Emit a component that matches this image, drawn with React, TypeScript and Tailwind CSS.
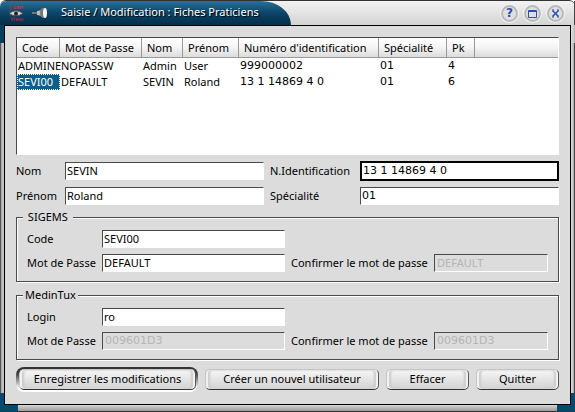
import { useState } from "react";
import type { ReactNode } from "react";

const columns = ["Code", "Mot de Passe", "Nom", "Prénom", "Numéro d'identification", "Spécialité", "Pk", ""];
const widths = ["w-[43px]", "w-[82px]", "w-[41px]", "w-[56px]", "w-[140px]", "w-[68px]", "w-[28px]", ""];
const rows = [
  ["ADMINE", "NOPASSW", "Admin", "User", "999000002", "01", "4", ""],
  ["SEVI00", "DEFAULT", "SEVIN", "Roland", "13 1 14869 4 0", "01", "6", ""],
];

// Numbers are set in a wider face than names.
const face = (text: string) => (/^\d/.test(text) ? "font-['DejaVu_Sans',sans-serif]" : "");

function Field({ id, label, value, disabled = false, focused = false }: {
  id: string; label: string; value: string; disabled?: boolean; focused?: boolean;
}) {
  const [text, setText] = useState(value);
  const look = disabled
    ? "h-[18px] border px-[2px] bg-[#dcdcdc] text-[#b4b4b4] border-t-[#4a4a4a] border-l-[#4a4a4a] border-b-white border-r-white"
    : focused
      ? "h-5 -my-px border-2 px-px bg-white border-black outline-none"
      : "h-[18px] border px-px bg-white border-t-[#4a4a4a] border-l-[#4a4a4a] border-b-white border-r-white";
  return (
    <>
      <label htmlFor={id} className="whitespace-nowrap leading-4">{label}</label>
      <input
        id={id}
        value={text}
        disabled={disabled}
        onChange={(e) => setText(e.target.value)}
        className={`w-full min-w-0 pb-px ${look} ${face(text)}`}
      />
    </>
  );
}

function Group({ title, children }: { title: string; children: ReactNode }) {
  return (
    <fieldset className="min-w-0 border border-[#4a4a4a] px-[10px] pt-[5px] pb-[9px] shadow-[inset_1px_1px_0_white,1px_1px_0_white]">
      <legend className="-ml-1 bg-[#dcdcdc] px-[2px] leading-4 whitespace-pre">{title}</legend>
      <div className="grid grid-cols-[75px_183fr_6px_143px_114fr] items-center gap-y-[6px]">{children}</div>
    </fieldset>
  );
}

function PushButton({ children, main = false }: { children: ReactNode; main?: boolean }) {
  return (
    <div className={main ? "rounded-[8px] bg-linear-to-b from-[#333] from-20% to-white to-85% p-[2px] pl-[3px]" : ""}>
      <button className="block h-[21px] w-full rounded-[5px] border border-[#c4c4c4] border-r-[#555] border-b-[#333] bg-linear-to-b from-[#f6f6f6] via-[#e4e4e4] to-[#d2d2d2] whitespace-nowrap shadow-[inset_2px_0_1px_#f4f4f4,inset_-2px_0_1px_#f4f4f4,inset_4px_0_2px_#cacaca,inset_-4px_0_2px_#cacaca]">
        {children}
      </button>
    </div>
  );
}

function RoundButton({ label, children }: { label: string; children: ReactNode }) {
  return (
    <button aria-label={label} className="flex size-[17px] items-center justify-center rounded-full border-2 border-[#b9b9b9] bg-[#dfdfdf] text-[#2a4fae] shadow-[0_0_0_1px_#f4f4f4]">
      {children}
    </button>
  );
}

function SideFrame({ edge, top }: { edge: string; top: string }) {
  return (
    <div className={`flex w-1 shrink-0 flex-col ${edge}`}>
      <div className={`h-[18px] ${top}`} />
      <div className="grow" />
      <div className="h-3 bg-[#064a70]" />
    </div>
  );
}

export default function App() {
  return (
    <div className="w-full bg-white font-['Noto_Sans','DejaVu_Sans',sans-serif] text-[11px] text-black">
      <header className="flex h-[25px] rounded-t-[6px] border-t border-[#333] bg-linear-to-b from-[#f2f2f2] to-[#d4d4d4]">
        <h1 className="flex w-[291px] shrink-0 items-center rounded-tl-[6px] rounded-tr-[30px_24px] bg-linear-to-b from-[#2b7199] via-[#0c4468] to-[#032f49] pb-px pl-2 text-white">
          <svg width="16" height="18" viewBox="0 0 16 18" aria-hidden="true">
            <path d="M4 1.5H2.500V6" fill="none" stroke="#d0202c" />
            <text x="5" y="5" fontSize="6" fill="#e0303c">cam</text>
            <path d="M1 9.500Q8 4 15 9.500Q8 14 1 9.500" fill="#d5d5d5" stroke="#555" />
            <circle cx="8" cy="9.500" r="2" fill="#222" />
            <text x="2" y="17" fontSize="6" fill="#d0202c">View</text>
          </svg>
          <svg className="ml-2" width="16" height="14" viewBox="0 0 16 14" aria-hidden="true">
            <path d="M0 7H6" stroke="#777" strokeWidth="2" />
            <path d="M5 5L10 4V10L5 9Z" fill="#bbb" />
            <ellipse cx="11" cy="7" rx="3" ry="5" fill="#777" />
            <ellipse cx="13" cy="7" rx="2" ry="5" fill="#f5f5f5" />
          </svg>
          <span className="pl-[13px] font-normal [text-shadow:1px_1px_1px_#000]">Saisie / Modification : Fiches Praticiens</span>
        </h1>
        <div className="flex grow items-center justify-end gap-[6px] border-r border-[#444] pr-[10px]">
          <RoundButton label="Aide">
            <span className="font-['DejaVu_Sans',sans-serif] text-[12px] leading-3 font-bold">?</span>
          </RoundButton>
          <RoundButton label="Agrandir">
            <svg width="9" height="9" viewBox="0 0 9 9" fill="none" aria-hidden="true">
              <path d="M.5 1.500H8.500V8.500H.5Z M0 2.500H9" stroke="currentColor" />
            </svg>
          </RoundButton>
          <RoundButton label="Fermer">
            <svg width="9" height="9" viewBox="0 0 9 9" fill="none" aria-hidden="true">
              <path d="M1.500 1.500L7.500 7.500M7.500 1.500L1.500 7.500" stroke="currentColor" strokeWidth="1.500" />
              <path d="M1 1H3M6 1H8M1 8H3M6 8H8" stroke="currentColor" />
            </svg>
          </RoundButton>
        </div>
      </header>
      <div className="flex">
        <SideFrame edge="bg-linear-to-r from-[#555] from-25% via-[#aaa] via-25% to-[#ccc]" top="bg-[#053f60]" />
        <main className="min-w-0 grow border border-black bg-[#dcdcdc] px-[11px] pt-[11px] pb-3">
          <div className="h-[118px] border border-t-[#4a4a4a] border-l-[#4a4a4a] border-white bg-white">
            <table className="w-full table-fixed border-separate border-spacing-0">
              <thead>
                <tr className="h-5">
                  {columns.map((c, i) => (
                    <th key={i} className={`${widths[i]} border-r border-b border-[#999] bg-linear-to-b from-white via-[#f4f4f4] to-[#dcdcdc] p-0 pl-[5px] text-left leading-4 font-normal whitespace-nowrap last:border-r-0`}>{c}</th>
                  ))}
                </tr>
              </thead>
              <tbody>
                {rows.map((r) => (
                  <tr key={r[0]} className="h-4">
                    {r.map((c, i) => (
                      <td key={i} className={`p-0 pb-px pl-px leading-[15px] whitespace-nowrap ${face(c)} ${c === "SEVI00" ? "bg-[#0b5d8c] text-white outline-1 -outline-offset-1 outline-dotted outline-white" : ""}`}>{c}</td>
                    ))}
                  </tr>
                ))}
              </tbody>
            </table>
          </div>
          <div className="mt-[7px] mb-1 grid grid-cols-[49px_1fr_6px_90px_1fr] items-center gap-y-[7px]">
            <Field id="nom" label="Nom" value="SEVIN" /><span />
            <Field id="ident" label="N.Identification" value="13 1 14869 4 0" focused />
            <Field id="prenom" label="Prénom" value="Roland" /><span />
            <Field id="spec" label="Spécialité" value="01" />
          </div>
          <Group title=" SIGEMS ">
            <Field id="code" label="Code" value="SEVI00" /><span /><span /><span />
            <Field id="pass" label="Mot de Passe" value="DEFAULT" /><span />
            <Field id="pass2" label="Confirmer le mot de passe" value="DEFAULT" disabled />
          </Group>
          <div className="h-[5px]" />
          <Group title="MedinTux">
            <Field id="login" label="Login" value="ro" /><span /><span /><span />
            <Field id="mpass" label="Mot de Passe" value="009601D3" disabled /><span />
            <Field id="mpass2" label="Confirmer le mot de passe" value="009601D3" disabled />
          </Group>
          <div className="mt-[7px] grid grid-cols-[182fr_174fr_83fr_83fr] items-center gap-[7px]">
            <PushButton main>Enregistrer les modifications</PushButton>
            <PushButton>Créer un nouvel utilisateur</PushButton>
            <PushButton>Effacer</PushButton>
            <PushButton>Quitter</PushButton>
          </div>
        </main>
        <SideFrame edge="bg-linear-to-r from-[#e4e4e4] via-[#aaa] via-75% to-[#444] to-75%" top="bg-linear-to-r from-[#e4e4e4] to-[#bbb]" />
      </div>
      <footer className="flex h-[7px] justify-between border-b border-[#333] bg-linear-to-b from-[#d8d8d8] to-[#999]">
        <div className="w-[18px] bg-[#064a70]" />
        <div className="w-[18px] bg-[#064a70]" />
      </footer>
    </div>
  );
}
